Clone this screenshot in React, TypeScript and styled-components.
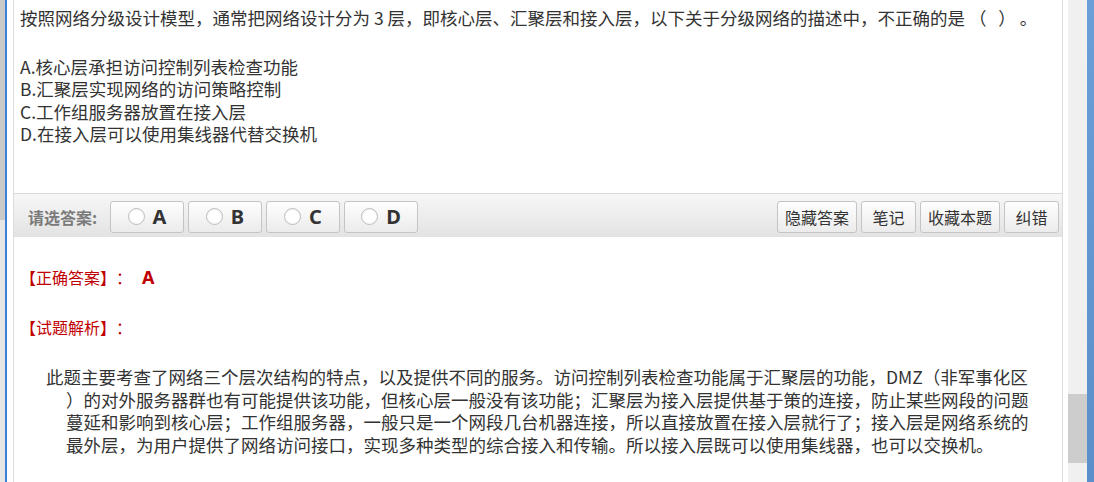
import React from 'react';
import styled, { createGlobalStyle } from 'styled-components';

const GlobalStyle = createGlobalStyle`
  html, body {
    margin: 0;
    padding: 0;
    background: #fff;
  }
  body {
    font-family: "Noto Sans CJK SC", "Noto Sans", sans-serif;
    color: #333;
    text-spacing-trim: space-all;
  }
`;

const options = [
  'A.核心层承担访问控制列表检查功能',
  'B.汇聚层实现网络的访问策略控制',
  'C.工作组服务器放置在接入层',
  'D.在接入层可以使用集线器代替交换机',
];

const letters = ['A', 'B', 'C', 'D'];
const tools = ['隐藏答案', '笔记', '收藏本题', '纠错'];

const explanation =
  '此题主要考查了网络三个层次结构的特点，以及提供不同的服务。访问控制列表检查功能属于汇聚层的功能，DMZ（非军事化区）的对外服务器群也有可能提供该功能，但核心层一般没有该功能；汇聚层为接入层提供基于策的连接，防止某些网段的问题蔓延和影响到核心层；工作组服务器，一般只是一个网段几台机器连接，所以直接放置在接入层就行了；接入层是网络系统的最外层，为用户提供了网络访问接口，实现多种类型的综合接入和传输。所以接入层既可以使用集线器，也可以交换机。';

function App() {
  return (
    <Frame>
      <GlobalStyle />
      <OuterRail>
        <OuterThumb />
      </OuterRail>
      <Accent />
      <Gutter />
      <Panel>
        <Question>
          <Stem>按照网络分级设计模型，通常把网络设计分为 3 层，即核心层、汇聚层和接入层，以下关于分级网络的描述中，不正确的是 （   ） 。</Stem>
          <OptionList>
            {options.map(o => (
              <Option key={o}>{o}</Option>
            ))}
          </OptionList>
        </Question>
        <Toolbar>
          <Prompt>请选答案:</Prompt>
          <Choices>
            {letters.map(l => (
              <ChoiceButton key={l}>
                <Radio />
                <Letter>{l}</Letter>
              </ChoiceButton>
            ))}
          </Choices>
          <Tools>
            {tools.map(t => (
              <ToolButton key={t}>{t}</ToolButton>
            ))}
          </Tools>
        </Toolbar>
        <Answer>
          <Heading>
            【正确答案】：<AnswerLetter>A</AnswerLetter>
          </Heading>
          <Heading $gap={28}>【试题解析】：</Heading>
          <Explanation>{explanation}</Explanation>
        </Answer>
      </Panel>
      <InnerGap />
      <Scrollbar>
        <Thumb />
      </Scrollbar>
      <WindowEdge />
    </Frame>
  );
}

const Frame = styled.div`
  display: flex;
  width: 1094px;
  height: 482px;
  overflow: hidden;
  background: #fff;
`;

const OuterRail = styled.div`
  width: 5px;
  display: flex;
  flex-direction: column;
  background: #e6e6e6;
`;

const OuterThumb = styled.div`
  height: 220px;
  background: #c9c9c9;
`;

const Accent = styled.div`
  width: 2px;
  background: #3d7fd6;
`;

const Gutter = styled.div`
  width: 6px;
`;

const Panel = styled.div`
  width: 1048px;
  border-left: 1px solid #dcdcdc;
  border-right: 1px solid #dcdcdc;
  display: flex;
  flex-direction: column;
`;

const Question = styled.div`
  padding: 7px 0 0 6px;
  font-size: 17.5px;
  line-height: 22.5px;
  color: #333;
`;

const Stem = styled.p`
  margin: 0;
  white-space: pre-wrap;
`;

const OptionList = styled.div`
  margin-top: 26px;
`;

const Option = styled.div`
  line-height: 22.6px;
`;

const Toolbar = styled.div`
  margin-top: 47px;
  height: 44px;
  box-sizing: border-box;
  border-top: 1px solid #d8d8d8;
  border-bottom: 1px solid #e2e2e2;
  background: linear-gradient(#f7f7f7, #e3e3e3);
  display: flex;
  align-items: flex-start;
  padding: 7px 3px 0 14px;
`;

const Prompt = styled.span`
  font-size: 16px;
  font-weight: bold;
  color: #7a7a7a;
  line-height: 32px;
  width: 82px;
`;

const Choices = styled.div`
  display: flex;
  gap: 4px;
`;

const ButtonBase = styled.button`
  height: 32px;
  box-sizing: border-box;
  border: 1px solid #c4c4c4;
  border-radius: 3px;
  background: linear-gradient(#fefefe, #ebebeb);
  display: flex;
  align-items: center;
  justify-content: center;
  font-family: "Noto Sans CJK SC", "Noto Sans", sans-serif;
  padding: 0;
  cursor: pointer;
`;

const ChoiceButton = styled(ButtonBase)`
  width: 74px;
  gap: 8px;
`;

const Radio = styled.span`
  width: 15px;
  height: 15px;
  border-radius: 50%;
  border: 1px solid #bdbdbd;
  background: radial-gradient(circle at 50% 40%, #fff 55%, #f0f0f0);
  box-shadow: inset 0 1px 1px rgba(0, 0, 0, 0.06);
`;

const Letter = styled.span`
  font-family: "Noto Sans", "Open Sans", sans-serif;
  font-weight: bold;
  font-size: 20px;
  color: #333;
  line-height: 1;
`;

const Tools = styled.div`
  margin-left: auto;
  display: flex;
  gap: 4px;
`;

const ToolButton = styled(ButtonBase)`
  min-width: 55px;
  padding: 0 7px;
  font-size: 16px;
  color: #333;
`;

const Answer = styled.div`
  padding: 29px 0 0 6px;
`;

const Heading = styled.div<{ $gap?: number }>`
  margin-top: ${p => p.$gap || 0}px;
  font-size: 16px;
  line-height: 22px;
  color: #c00000;
`;

const AnswerLetter = styled.span`
  margin-left: 10px;
  font-family: "Noto Sans", sans-serif;
  font-weight: bold;
  font-size: 18px;
`;

const Explanation = styled.p`
  margin: 28px 0 0 0;
  padding: 0 26px 0 46px;
  text-indent: -20px;
  font-size: 17.5px;
  line-height: 22.7px;
  color: #333;
  line-break: anywhere;
`;

const InnerGap = styled.div`
  width: 5px;
`;

const Scrollbar = styled.div`
  width: 19px;
  background: #f0f0f0;
  display: flex;
  flex-direction: column;
`;

const Thumb = styled.div`
  margin-top: 394px;
  height: 69px;
  background: #cdcdcd;
`;

const WindowEdge = styled.div`
  width: 7px;
  background: linear-gradient(#6a9fd8, #5b8fcb);
`;

export default App;
